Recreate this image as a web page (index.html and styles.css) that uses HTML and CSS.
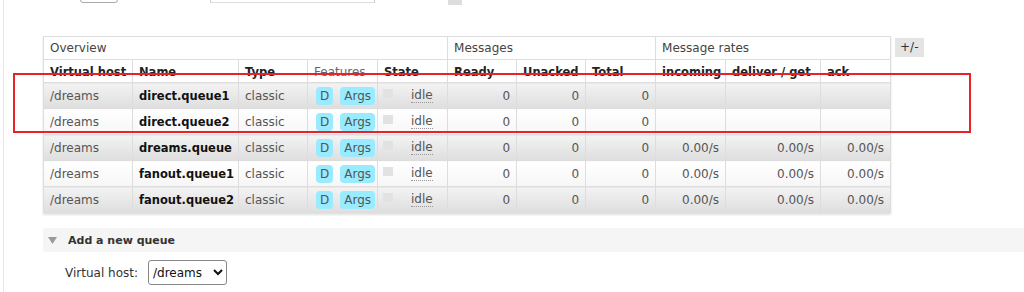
FILE: index.html
```html
<!DOCTYPE html>
<html lang="en">
<head>
    <meta charset="UTF-8">
    <title>Queues</title>
    <link rel="stylesheet" href="styles.css">
</head>
<body>
    <div class="main">
        <div class="pager">
            <select class="page-select"><option>1</option></select>
            <input class="filter-input" type="text">
            <span class="regex">Regex</span>
            <span class="help"></span>
        </div>

        <div class="list-wrap">
            <table class="list">
                <colgroup>
                    <col style="width:89px"><col style="width:106px"><col style="width:69px">
                    <col style="width:70px"><col style="width:70px"><col style="width:69px">
                    <col style="width:69px"><col style="width:70px"><col style="width:70px">
                    <col style="width:95px"><col style="width:70px">
                </colgroup>
                <thead>
                    <tr class="group">
                        <th colspan="5">Overview</th>
                        <th colspan="3">Messages</th>
                        <th colspan="3">Message rates</th>
                    </tr>
                    <tr class="cols">
                        <th>Virtual host</th>
                        <th>Name</th>
                        <th>Type</th>
                        <th class="plain">Features</th>
                        <th>State</th>
                        <th>Ready</th>
                        <th>Unacked</th>
                        <th>Total</th>
                        <th>incoming</th>
                        <th>deliver / get</th>
                        <th>ack</th>
                    </tr>
                </thead>
                <tbody>
                    <tr class="alt1">
                        <td>/dreams</td>
                        <td class="name">direct.queue1</td>
                        <td>classic</td>
                        <td><span class="tag">D</span><span class="tag">Args</span></td>
                        <td><span class="state"><span class="dot"></span><abbr>idle</abbr></span></td>
                        <td class="r">0</td><td class="r">0</td><td class="r">0</td>
                        <td></td><td></td><td></td>
                    </tr>
                    <tr class="alt2">
                        <td>/dreams</td>
                        <td class="name">direct.queue2</td>
                        <td>classic</td>
                        <td><span class="tag">D</span><span class="tag">Args</span></td>
                        <td><span class="state"><span class="dot"></span><abbr>idle</abbr></span></td>
                        <td class="r">0</td><td class="r">0</td><td class="r">0</td>
                        <td></td><td></td><td></td>
                    </tr>
                    <tr class="alt1">
                        <td>/dreams</td>
                        <td class="name">dreams.queue</td>
                        <td>classic</td>
                        <td><span class="tag">D</span><span class="tag">Args</span></td>
                        <td><span class="state"><span class="dot"></span><abbr>idle</abbr></span></td>
                        <td class="r">0</td><td class="r">0</td><td class="r">0</td>
                        <td class="r">0.00/s</td><td class="r">0.00/s</td><td class="r">0.00/s</td>
                    </tr>
                    <tr class="alt2">
                        <td>/dreams</td>
                        <td class="name">fanout.queue1</td>
                        <td>classic</td>
                        <td><span class="tag">D</span><span class="tag">Args</span></td>
                        <td><span class="state"><span class="dot"></span><abbr>idle</abbr></span></td>
                        <td class="r">0</td><td class="r">0</td><td class="r">0</td>
                        <td class="r">0.00/s</td><td class="r">0.00/s</td><td class="r">0.00/s</td>
                    </tr>
                    <tr class="alt1">
                        <td>/dreams</td>
                        <td class="name">fanout.queue2</td>
                        <td>classic</td>
                        <td><span class="tag">D</span><span class="tag">Args</span></td>
                        <td><span class="state"><span class="dot"></span><abbr>idle</abbr></span></td>
                        <td class="r">0</td><td class="r">0</td><td class="r">0</td>
                        <td class="r">0.00/s</td><td class="r">0.00/s</td><td class="r">0.00/s</td>
                    </tr>
                </tbody>
            </table>
            <span class="toggle">+/-</span>
        </div>

        <div class="section-head">
            <svg width="9" height="7" viewBox="0 0 9 7"><polygon points="0,0 9,0 4.5,7" fill="#9a9a9a"/></svg>
            Add a new queue
        </div>

        <div class="form-row">
            <label>Virtual host:</label>
            <select class="vhost"><option>/dreams</option></select>
        </div>
        <div class="form-row">
            <label></label>
            <select class="vhost"><option>Classic</option></select>
        </div>
    </div>

    <div class="highlight"></div>
</body>
</html>
```

FILE: styles.css
```css
body {
    margin: 0;
    background: #fff;
    font-family: 'DejaVu Sans', Verdana, sans-serif;
    font-size: 12px;
    color: #444;
    overflow: hidden;
}
.main {
    margin-left: 3px;
    border-left: 1px solid #e6e6e6;
    padding-left: 39px;
    min-height: 292px;
}

/* pager, mostly scrolled out of view */
.pager {
    display: flex;
    align-items: flex-end;
    height: 24px;
    margin-top: -21px;
}
.page-select {
    margin-left: 37px;
    width: 38px;
    height: 24px;
    border: 1px solid #aaa;
    border-radius: 3px;
    background: #fff;
}
.filter-input {
    margin-left: 92px;
    width: 165px;
    height: 22px;
    box-sizing: border-box;
    border: 1px solid #ccc;
    border-bottom-color: #ddd;
    padding: 0;
}
.regex {
    margin-left: 28px;
    line-height: 14px;
    margin-bottom: 6px;
    color: #222;
}
.help {
    margin-left: 8px;
    width: 14px;
    height: 18px;
    margin-bottom: -2px;
    background: #ddd;
}

/* queue list */
.list-wrap {
    display: flex;
    align-items: flex-start;
    gap: 4px;
    margin-top: 33px;
}
table.list {
    border-collapse: collapse;
    table-layout: fixed;
    width: 847px;
    box-shadow: 0 2px 2px rgba(0,0,0,0.12);
}
table.list th,
table.list td {
    border: 1px solid #ddd;
    padding: 0 6px;
    text-align: left;
    white-space: nowrap;
    overflow: hidden;
}
table.list tr.group th {
    height: 22px;
    font-weight: normal;
    color: #444;
    background: #fff;
}
table.list tr.cols th {
    height: 20px;
    padding-top: 2px;
    font-weight: bold;
    font-size: 11.5px;
    color: #222;
    background: #fff;
}
table.list tr.cols th.plain {
    font-weight: normal;
    font-size: 12px;
    color: #666;
}
table.list td {
    height: 25px;
    color: #555;
}
table.list td.name {
    font-weight: bold;
    font-size: 11.5px;
    color: #111;
}
table.list td.r {
    text-align: right;
}
tr.alt1 td {
    background: linear-gradient(#f3f3f3, #dedede);
}
tr.alt2 td {
    background: linear-gradient(#fff, #f6f6f6);
}
.tag {
    display: inline-block;
    margin-left: 2px;
    margin-right: 5px;
    padding: 2px 4px 1px;
    border-radius: 4px;
    background: #99ebff;
    color: #555;
    line-height: 15px;
}
.state {
    display: flex;
    align-items: center;
    gap: 18px;
}
.dot {
    display: inline-block;
    width: 10px;
    height: 9px;
    margin-top: -5px;
    margin-left: -1px;
    background: #e2e2e2;
}
abbr {
    text-decoration: none;
    border-bottom: 1px dotted #999;
}
.toggle {
    margin-top: 2px;
    padding: 1px 5px 2px;
    background: #e4e4e4;
    color: #333;
    font-size: 12px;
    line-height: 16px;
}

/* add queue form */
.section-head {
    display: flex;
    align-items: center;
    gap: 11px;
    margin-top: 15px;
    height: 24px;
    padding-left: 5px;
    background: #f5f5f5;
    font-weight: bold;
    font-size: 11px;
    color: #333;
}
.form-row {
    display: flex;
    align-items: center;
    margin-top: 8px;
}
.form-row label {
    width: 95px;
    padding-right: 10px;
    text-align: right;
    color: #333;
}
.vhost {
    width: 79px;
    height: 25px;
    border: 1px solid #888;
    border-radius: 3px;
    background: #fff;
    font-family: 'DejaVu Sans', Verdana, sans-serif;
    font-size: 12px;
    color: #111;
}

/* annotation drawn over the table */
.highlight {
    position: absolute;
    left: 13px;
    top: 73px;
    width: 954px;
    height: 56px;
    border: 2px solid #e8222a;
}
```
